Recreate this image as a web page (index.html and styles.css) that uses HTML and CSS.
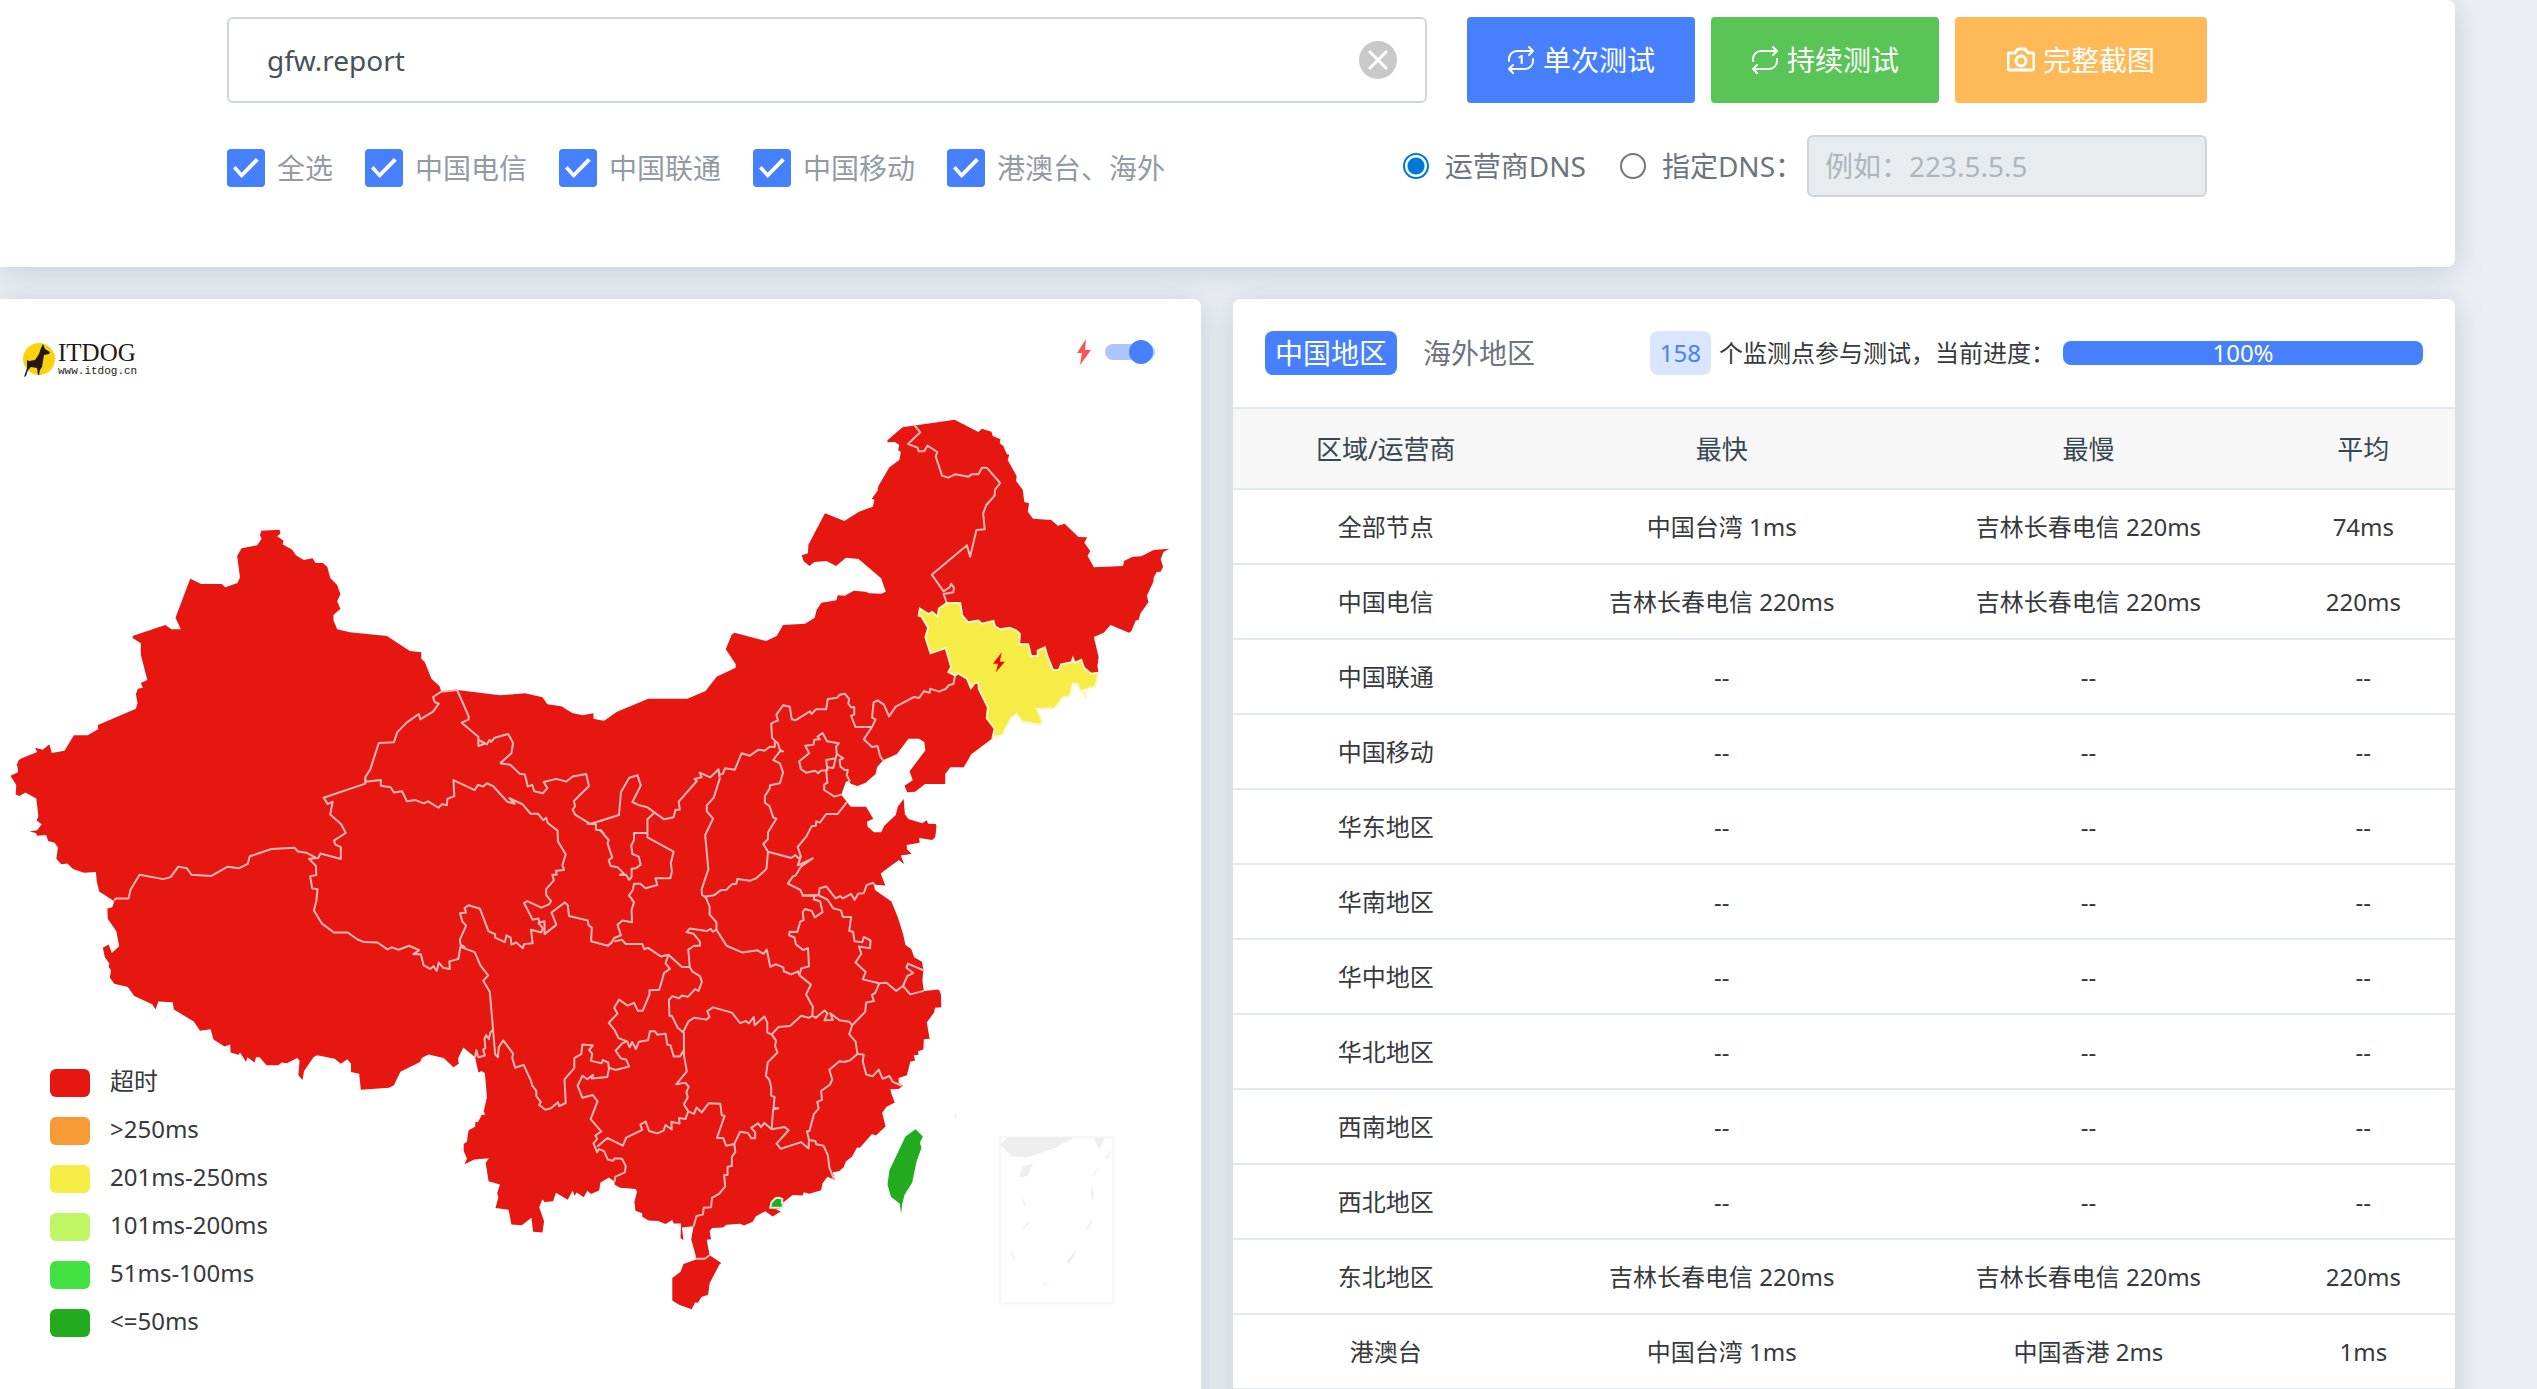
FILE: index.html
```html
<!DOCTYPE html>
<html lang="zh-CN">
<head>
<meta charset="utf-8">
<meta name="viewport" content="width=device-width, initial-scale=1">
<title>gfw.report - ITDOG</title>
<link rel="stylesheet" href="styles.css">
</head>
<body>
<main class="page">
  <form class="card test-form">
    <div class="search-row">
      <div class="host-field">
        <input class="host-input" type="text" value="gfw.report" aria-label="域名">
        <button class="clear-btn" type="button" aria-label="清空">
          <svg viewBox="0 0 38 38" aria-hidden="true"><circle cx="19" cy="19" r="19" fill="#c9c9c9"/><path d="M10 10l18 18M28 10L10 28" stroke="#fff" stroke-width="3" fill="none"/></svg>
        </button>
      </div>
      <div class="actions">
        <button class="btn btn-blue" type="button">
          <svg class="icon" viewBox="0 0 28 28" aria-hidden="true"><path d="M2 15v-2a8 8 0 0 1 8-8h16M22 1l4 4-4 4M26 13v2a8 8 0 0 1-8 8H2M6 19l-4 4 4 4"/><text x="14" y="18" text-anchor="middle">1</text></svg>
          单次测试</button>
        <button class="btn btn-green" type="button">
          <svg class="icon" viewBox="0 0 28 28" aria-hidden="true"><path d="M2 15v-2a8 8 0 0 1 8-8h16M22 1l4 4-4 4M26 13v2a8 8 0 0 1-8 8H2M6 19l-4 4 4 4"/></svg>
          持续测试</button>
        <button class="btn btn-orange" type="button">
          <svg class="icon" viewBox="0 0 28 28" aria-hidden="true"><path stroke-width="3" d="M3 7h5l3-4h7l3 4h4a2 2 0 0 1 2 2v13a2 2 0 0 1-2 2H3a2 2 0 0 1-2-2V9a2 2 0 0 1 2-2z"/><circle cx="14" cy="15" r="5" stroke-width="3"/></svg>
          完整截图</button>
      </div>
    </div>
    <div class="option-row">
      <div class="isp-list">
        <label class="check"><input type="checkbox" checked>全选</label>
        <label class="check"><input type="checkbox" checked>中国电信</label>
        <label class="check"><input type="checkbox" checked>中国联通</label>
        <label class="check"><input type="checkbox" checked>中国移动</label>
        <label class="check"><input type="checkbox" checked>港澳台、海外</label>
      </div>
      <div class="dns">
        <label class="radio"><input type="radio" name="dns" checked>运营商DNS</label>
        <label class="radio"><input type="radio" name="dns">指定DNS：</label>
        <input class="dns-input" type="text" placeholder="例如：223.5.5.5" aria-label="指定DNS" disabled>
      </div>
    </div>
  </form>

  <div class="results">
    <section class="card map-card">
      <div class="map-head">
        <a class="logo" href="#">
          <svg class="logo-mark" viewBox="0 0 34 36" aria-hidden="true">
            <circle cx="17" cy="17" r="16" fill="#fbd20a"/>
            <path d="M21 2l2 5 5 3-1 2-5 1-1 6-1 6-2 3-1 5h-1l-1-7-6-1-3 3-2 6-2 1 3-9V18l2 1 6-1 4-6 2-6z" fill="#231815"/>
          </svg>
          <span class="logo-text"><span class="logo-name">ITDOG</span><span class="logo-url">www.itdog.cn</span></span>
        </a>
        <label class="flash-toggle">
          <svg class="bolt" viewBox="0 0 14 26" aria-hidden="true"><path d="M9 0L0 14h5L3 26l11-15H8z" fill="#ff5252"/></svg>
          <input type="checkbox" checked aria-label="闪电动画">
        </label>
      </div>
      <div class="map-wrap">
        <svg class="map" viewBox="0 399 1201 990" role="img" aria-label="中国地图">
          <g class="land">
            <!-- north-west -->
            <path transform="matrix(.408163 0 0 .333333 0 290)" d="M40 1500L40 1485 26 1457 44 1447 46 1432 41 1425 49 1407 91 1386 86 1373 105 1379 121 1363 127 1389 158 1382 181 1336 215 1336 240 1318 240 1305 333 1256 337 1240 333 1212 338 1196 350 1193 345 1179 361 1170 345 1094 345 1060 325 1044 325 1038 405 1005 420 1018 443 1018 430 983 466 866 493 882 543 882 552 892 582 879 588 862 581 798 592 775 630 766 641 746 637 736 640 722 685 719 687 731 679 739 695 752 692 763 716 779 725 796 744 810 766 805 773 819 791 819 802 831 809 864 826 885 834 913 826 934 834 956 817 975 817 991 826 1018 857 1027 948 1038 1004 1083 1032 1087 1032 1106 1041 1117 1057 1166 1077 1189 1081 1205 1120 1200 1225 1216 1286 1210 1329 1222 1341 1243 1375 1249 1402 1269 1427 1276 1454 1270 1454 1286 1480 1293 1513 1266 1568 1238V1500z"/>
            <!-- south-west -->
            <path transform="matrix(.408163 0 0 .401148 0 760)" d="M46 0L42 12 45 33 26 40 41 62 38 86 48 90 62 81 89 96 94 140 90 151 102 160 91 175 72 178 88 182 91 189 113 187 118 202 134 206 142 219 138 246 150 260 165 258 179 272 206 281 235 279 237 302 243 328 280 352 275 367 263 370 264 396 285 427 292 464 274 481 266 460 252 468 257 492 268 507 266 515 272 524 269 542 280 558 313 566 329 588 373 609 381 622 388 602 423 604 426 622 475 652 490 675 516 671 523 697 550 714 564 709 565 729 584 735 588 729 603 753 606 741 624 754 627 741 636 741 653 761 682 761 690 754 703 756 728 743 734 749 731 786 741 798 745 775 768 741 777 736 820 745 835 757 851 746 860 757 860 778 880 782 884 822 953 817 965 811 981 777 1029 753 1034 742 1050 734 1087 743 1111 766 1124 757 1122 745 1135 717 1164 741 1172 779 1180 775 1188 781 1193 841 1185 876 1189 884 1180 885 1171 903 1165 902 1164 914 1148 923 1144 951 1136 957 1136 974 1144 994 1138 1008 1162 996 1198 993 1190 1004 1197 1050 1225 1058 1218 1080 1221 1090 1214 1117 1246 1121 1253 1158 1278 1160 1302 1141 1306 1176 1329 1178 1333 1150 1321 1115 1329 1095 1334 1102 1355 1100 1362 1079 1391 1096 1403 1074 1408 1086 1413 1078 1430 1090 1439 1074 1448 1082 1468 1073 1471 1053 1492 1041 1506 1051 1507 1059 1521 1065 1558 1069 1561 1076 1555 1102 1558 1123 1568 1127V0z"/>
            <!-- north-east -->
            <path transform="matrix(.395408 0 0 .333333 600 400)" d="M0 962L11 962 42 936 122 896 221 896 267 873 295 830 343 803 343 792 318 748 333 704 340 698 420 723 447 708 463 675 519 671 543 653 548 629 560 608 598 601 601 586 619 587 642 572 671 575 681 580 711 581 723 575 711 535 654 477 622 473 597 498 573 483 542 486 530 498 515 484 510 466 526 460 527 434 569 340 618 363 655 335 690 320 694 299 687 297 702 272 704 258 732 202 757 180 761 156 754 150 757 135 746 126 727 127 727 121 765 82 897 59 957 96 966 86 990 95 993 108 1013 118 1011 130 1020 138 1029 163 1035 164 1031 180 1054 229 1052 242 1069 269 1073 306 1085 310 1082 335 1095 356 1141 360 1158 377 1175 371 1210 411 1232 412 1225 428 1240 454 1233 467 1249 502 1323 498 1325 483 1347 470 1369 469 1400 450 1440 446 1425 456 1418 477 1424 500 1418 515 1408 516 1400 533 1400 544 1383 587 1387 607 1367 640 1362 660 1355 661 1344 693 1338 698 1291 675 1274 698 1249 711 1261 771 1258 798 1261 818 1150 850 1000 960 993 1015 939 1063 920 1102 886 1102 873 1122 873 1152 822 1152 797 1175 777 1177 770 1157 791 1141 783 1114 823 1051 820 1026 807 1016 780 1016 751 1062 716 1081 701 1101 697 1122 672 1148 651 1158 634 1151 629 1143 622 1145 610 1184 624 1205 634 1220 673 1220 691 1256 675 1265 677 1280 693 1297 711 1297 719 1277 748 1245 753 1220 768 1197 771 1243 780 1257 815 1270 826 1261 830 1271 849 1272 851 1279 848 1311 840 1320 808 1314 805 1327 775 1333 775 1349 788 1361 760 1366 769 1392 757 1379 708 1420 721 1456 693 1453 692 1468 711 1490 730 1500H0z"/>
            <!-- south-east and Hainan -->
            <path transform="matrix(.484694 0 0 .350128 460 840)" d="M300 0H948V8L921 14 922 26 931 39 909 44 915 68 905 56 868 96 877 130 854 127 856 143 890 176 903 220 914 268 919 300 931 311 937 335 953 348 956 370 954 402 957 431 988 427 992 440 993 478 980 479 978 493 963 521 969 568 957 569 956 598 945 603 946 613 936 615 939 630 929 633 922 672 905 680 905 693 914 702 905 711 888 712 890 725 897 750 880 762 871 779 878 818 858 844 850 840 825 879 819 878 809 904 796 918 792 934 782 946 769 949 774 971 758 962 748 980 745 1000 721 1010 709 1006 707 1015 686 1014 667 1035 665 1050 652 1055 662 1061 645 1075 630 1060 610 1075 604 1090 586 1101 578 1096 550 1099 542 1107 520 1108 515 1117 518 1140 509 1142 515 1186 539 1208 535 1213 515 1266 512 1299 498 1305 491 1322 485 1321 478 1340 453 1328 438 1315 438 1251 455 1233 461 1211 487 1198 486 1185 477 1140 482 1103 458 1107 461 1143 455 1137 456 1095 441 1095 438 1085 424 1097 409 1088 389 1087 376 1076 376 1066 362 1059 360 1033 366 1004 362 996 330 993 319 984 319 975 308 964 300 900z"/>
          </g>

          <g class="borders" transform="matrix(.408163 0 0 .333333 0 290)">
            <path d="M1081 1205L1061 1221 1065 1236 1075 1241 1061 1265 1030 1288 1026 1272 997 1297 973 1327 965 1357 928 1359 907 1439 895 1461V1478"/>
            <path d="M1081 1205L1120 1200 1148 1278 1148 1289 1131 1298 1172 1340 1172 1368 1186 1362 1174 1350M1186 1362L1180 1354 1193 1363 1199 1350 1203 1356 1212 1343 1245 1332 1257 1359 1253 1390 1225 1420"/>
          </g>
          <g class="borders" transform="matrix(.408163 0 0 .401148 0 760)">
            <path d="M895 54L933 50 933 64 957 68 965 81 985 78 997 103 1018 100 1038 108 1049 103 1074 119 1083 110 1095 113 1096 97 1113 90 1111 50 1163 75 1171 62 1184 66 1193 58 1209 66 1243 104 1261 109 1248 95 1281 111 1300 134 1318 134 1331 150 1338 144 1342 157 1366 176 1367 203 1386 235 1378 262 1382 274 1362 276 1364 286 1353 286 1357 300 1338 322 1338 336 1350 352 1345 360 1326 368 1292 352 1284 357 1305 398 1319 395 1322 405 1334 402 1334 434 1363 411 1351 380 1384 355 1391 362 1394 389 1440 400 1442 412 1450 418 1448 452 1489 463 1500 454"/>
            <path d="M895 46V59L793 94 803 110 815 104 809 136 836 160 847 182 818 201 822 211 835 217 835 247 785 233 780 244 757 246 774 264 775 287 760 290 765 320 778 322 775 352 769 375 789 408 818 430 852 430 877 448 893 454 925 455 949 472 960 467 977 473 1002 463 1027 474 1013 484 1031 484 1038 512 1054 521 1062 514 1070 526 1075 505 1086 518 1102 521 1101 502 1123 496 1128 466 1163 479 1177 512 1196 537 1184 550 1200 578 1208 672 1213 733 1220 741 1222 716 1233 699 1257 732 1255 742 1262 767 1283 760 1301 800 1304 812 1314 825 1314 838 1325 852 1321 860 1336 872 1350 868 1367 853 1370 863 1386 855 1383 796 1407 768 1407 743 1424 733 1427 709 1453 712 1443 723 1451 732 1448 750 1474 756 1477 748 1490 754 1492 770 1488 790 1450 794 1453 785 1439 796 1427 787 1415 812 1427 842 1452 835 1464 851 1447 895 1473 926 1459 936 1463 945 1454 955 1463 978 1467 970 1480 975 1489 996 1502 999 1506 993 1524 994 1533 1012 1531 1028 1507 1039 1506 1051"/>
            <path d="M280 350L284 345 315 345 320 323 342 286 400 297 418 292 437 266 458 270 469 286 518 289 558 266 585 270 607 259 612 240 665 222 722 219 730 228 750 231 775 244"/>
            <path d="M1140 467L1128 460 1127 447 1142 413 1133 403 1127 382 1142 380 1138 369 1148 362 1176 371 1197 427 1213 434 1213 443 1237 454 1241 437 1251 443 1253 460 1265 455 1281 469 1284 459 1305 457 1301 423 1326 430 1330 420 1318 405"/>
            <path d="M1164 741L1167 723 1172 741 1188 737 1184 722 1189 718 1187 694 1191 686 1198 696 1201 680 1208 672"/>
            <path d="M1225 8L1250 12 1273 34 1286 36 1293 66 1304 62 1309 78 1330 83 1341 70 1332 55 1363 47 1387 54 1403 41 1436 35 1443 65 1406 102 1409 115 1403 124 1409 136 1446 159 1477 150M1437 159L1460 160 1460 174 1472 175 1480 184"/>
          </g>
          <g class="borders" transform="matrix(.395408 0 0 .333333 600 400)">
            <path d="M795 75L810 97 779 132 803 143 806 154 820 154 828 137 853 156 849 169 865 227 881 233 898 223 932 230 940 223 957 223 966 203 978 203 1012 249 999 269 998 287 977 315 969 340 973 388 952 390 936 470 928 436 839 524 869 574 885 561 888 551 895 563 894 577 869 582 877 609"/>
            <path d="M898 826L894 852 883 855 874 867 857 875 835 866 834 878 819 874 807 894 794 891 748 920 731 949 718 914 702 901 692 907 688 953 697 958 688 981 646 981 635 947 643 944 643 921 635 922 628 911 630 897 619 881 606 884 600 893 576 897 572 928 546 928 535 942 531 934 494 961 485 958 480 920 463 916 446 944 450 961 433 970 435 1013 442 1022 442 1041 429 1040 416 1052 401 1049 379 1067 358 1060 341 1109 316 1105 311 1121 301 1125 300 1108 279 1132 252 1118 257 1132 239 1137 245 1143 199 1205 202 1229 191 1229 186 1252 162 1258 120 1222 99 1216 82 1206 103 1157 95 1126 74 1133 53 1176 48 1245 0 1263"/>
            <path d="M688 981L667 1018 688 1041 702 1038 709 1070 717 1083"/>
            <path d="M442 1022L450 1030 455 1050 463 1054 455 1054 438 1080 455 1090 463 1117 455 1150 430 1156 429 1166 417 1188 417 1208 429 1219 438 1252 446 1256 425 1297 425 1317 413 1332 425 1355 421 1407"/>
            <path d="M301 1125L303 1135 288 1192 270 1216 270 1234 286 1256 266 1305 274 1408 257 1468 258 1485 264 1490 288 1486 305 1471 320 1469 333 1453 345 1451 347 1437 380 1442 395 1435 421 1407"/>
            <path d="M425 1355L484 1374 494 1365 502 1375 508 1370 500 1341 522 1309 535 1279 546 1277 547 1264 556 1268 572 1242 601 1242 624 1207"/>
            <path d="M508 1370L500 1396 538 1375 508 1400 495 1426 488 1429 475 1451 507 1470 513 1487 549 1487"/>
            <path d="M563 999L574 1024 604 1030 597 1040 599 1062 596 1075 572 1080 575 1110 558 1112 552 1120 544 1112 521 1118 508 1107 504 1084 529 1060 519 1037 540 1034 542 1019 556 1018 550 1010z"/>
            <path d="M599 1062L615 1075 606 1080 608 1100 619 1110 627 1110 624 1125 632 1145M572 1110L575 1148 567 1154 567 1170 593 1190 610 1184M596 1075L590 1104 572 1102"/>
            <path d="M136 1240L120 1258 120 1312 186 1355 179 1390 182 1414 178 1435 140 1435 145 1455 115 1465 102 1451 86 1451 83 1470 73 1487 83 1500"/>
            <path d="M120 1299L86 1299 86 1320 79 1337 82 1362 98 1370 103 1394 91 1405 80 1406 80 1430 74 1440 66 1424 50 1425 60 1420 45 1402 27 1398 22 1380 31 1372 19 1330 22 1320 0 1290"/>
          </g>
          <g class="borders" transform="matrix(.484694 0 0 .350128 460 840)">
            <path d="M354 170L359 177 354 200 355 235 335 230 325 242 332 272 318 280 312 294 305 302M318 290L334 285 342 297 376 297 380 312 388 308 415 333 430 328 458 363 474 363"/>
            <path d="M506 160L515 190 515 213 529 235 529 256 550 302 582 321 614 315 626 325 633 313 640 362 652 355 667 364 668 375 684 384 697 375 700 386 724 413 714 441 728 476 727 502"/>
            <path d="M529 256L522 262 517 254 509 260 474 253 467 263 482 268 495 290 495 302 483 302 471 313 474 363 479 375 495 389 499 405 492 431 485 426 470 448 458 444 452 452 438 446 431 457 432 502 437 502 449 536 460 549 472 517 483 508 509 513 515 505 510 489 522 478 561 493 578 523 590 517 596 524 606 506 608 529 628 504 634 521 634 550 643 555 657 534 681 531 704 502 720 508 727 502"/>
            <path d="M700 386L704 367 720 361 718 309 708 314 693 298 690 278 679 272 680 262 696 263 702 233 709 229 707 206 712 197 726 203 732 221 748 206 743 175 730 170 731 158"/>
            <path d="M727 502L734 508 752 487 758 495 752 515 769 514 764 495 783 515 803 519 809 529 803 555 816 575 820 611 805 629 793 634 783 632 762 656 768 684 763 699 745 717 747 742 737 748 740 767 730 783 721 831 716 832 720 857 733 860 735 869 750 873 759 901 762 936 772 970"/>
            <path d="M643 555L652 573 650 588 655 607 635 635 631 674 638 684 642 705 642 730 649 734 647 765 657 766 646 770 643 826 670 820 678 829 653 867 662 882 704 863 719 881 720 857"/>
            <path d="M643 826L628 808 621 820 615 809 601 822 609 835 609 852 601 852 594 837 578 833 566 868 568 891 561 905 561 931 552 933 552 957 545 957 547 990 535 1010 520 1022 518 1049 503 1050 501 1070 488 1074 482 1103"/>
            <path d="M566 868L549 873 543 851 530 851 546 788 540 786 537 753 513 752 499 778 488 764 483 782 471 775 462 755 470 735 467 720 472 705 465 693 446 698 468 661 462 614 462 549"/>
            <path d="M471 775L465 797 452 794 453 810 436 805 437 827 424 814 420 830 407 838 390 831 383 804 372 813 376 828 343 850 336 873 304 851 283 876"/>
            <path d="M430 328L424 352 433 368 421 380 411 428 391 429 391 441 377 488 367 488 359 465 346 473 328 456 318 479 325 496 307 522 319 543 327 566 345 575 350 592 355 577 363 597 369 576 388 572 392 546 402 546 407 556 424 553 428 585 434 586 441 618 454 618 462 600"/>
            <path d="M345 575L335 580 321 602 332 624 343 627 349 647 321 657 307 650"/>
            <path d="M707 158L740 158 758 170 770 195 786 201 790 220 807 220 803 260 811 262 814 289 830 292 833 277 847 287 846 309 823 304 828 325 816 350 837 377 831 398 865 409 880 408 900 431 914 417 929 441 957 431"/>
            <path d="M740 158L742 138 756 133 775 167 784 160 790 167 807 154 814 171 822 153 833 152 839 129 852 122 856 130"/>
            <path d="M914 417L923 388 935 380 921 365 924 353 956 372M865 409L857 436 850 443 854 460 838 464 836 491 809 529M820 611L833 613 831 632 838 670 851 675 864 656 872 682 886 674 893 691 912 702M487 1196L505 1196 515 1186"/>
          </g>

          <g transform="matrix(.395408 0 0 .333333 600 400)">
            <path class="jilin" d="M877 609L911 609 916 646 931 667 957 662 966 671 995 663 999 679 1012 688 1036 683 1052 691 1062 702 1060 733 1083 733 1090 768 1107 768 1107 752 1125 742 1131 767 1146 811 1161 809 1166 793 1193 787 1196 775 1201 789 1217 780 1224 803 1242 821 1261 818 1253 858 1218 873 1229 880 1229 892 1214 872 1209 854 1196 850 1188 889 1170 892 1150 925 1104 927 1118 961 1113 975 1067 964 1054 942 1040 954 1017 1005 993 1012 998 986 978 955 981 922 958 867 957 848 948 849 938 864 928 836 906 820 898 826 881 816 888 801 874 744 836 760 823 712 830 683 813 650 806 647 809 626 831 642 840 636 854 650 857 626z"/>
            <path fill="#f00" d="M1016 757L994 791H1007L1001 817 1024 785H1011z"/>
          </g>
          <g transform="matrix(.484694 0 0 .350128 460 840)">
            <path class="hongkong" d="M657 1022L665 1025 664 1036 667 1036 665 1050 640 1050 643 1034 651 1023z"/>
            <path fill="#23ab1f" d="M940 826L955 847 949 865 952 880 942 918 933 978 917 1014 912 1042 910 1068 907 1038 889 1019 882 984 886 943 919 847z"/>
            <rect class="inset" x="1114" y="849" width="234" height="474"/>
            <path fill="#eee" d="M1130 849H1268L1228 880 1170 907 1138 903 1114 868zM1307 851H1330L1319 884zM1160 932L1182 924 1171 959 1154 964zM1343 885L1338 909 1329 912zM1319 937L1305 964 1311 945zM1302 995H1307V1026H1302zM1158 1011L1168 1043 1163 1042zM1306 1080L1303 1093 1296 1110 1291 1109zM1176 1091L1156 1122 1166 1098zM1136 1178H1141L1146 1207zM1274 1164L1268 1186 1256 1209 1250 1208zM1222 1257L1206 1270 1199 1270zM1024 780L1026 793 1017 793z"/>
          </g>
        </svg>
        <ul class="legend">
          <li><span class="swatch timeout"></span>超时</li>
          <li><span class="swatch over250"></span>&gt;250ms</li>
          <li><span class="swatch to250"></span>201ms-250ms</li>
          <li><span class="swatch to200"></span>101ms-200ms</li>
          <li><span class="swatch to100"></span>51ms-100ms</li>
          <li><span class="swatch to50"></span>&lt;=50ms</li>
        </ul>
      </div>
    </section>

    <section class="card table-card">
      <div class="table-head">
        <div class="tabs">
          <button class="tab active" type="button">中国地区</button>
          <button class="tab" type="button">海外地区</button>
        </div>
        <div class="status">
          <span class="count">158</span>
          <span>个监测点参与测试，当前进度：</span>
          <div class="progress" role="progressbar" aria-valuenow="100" aria-label="当前进度"><div class="bar" style="width:100%">100%</div></div>
        </div>
      </div>
      <table class="stats">
        <colgroup><col class="c-area"><col class="c-ping"><col class="c-ping"><col class="c-avg"></colgroup>
        <thead><tr><th>区域/运营商</th><th>最快</th><th>最慢</th><th>平均</th></tr></thead>
        <tbody>
          <tr><td>全部节点</td><td>中国台湾 1ms</td><td>吉林长春电信 220ms</td><td>74ms</td></tr>
          <tr><td>中国电信</td><td>吉林长春电信 220ms</td><td>吉林长春电信 220ms</td><td>220ms</td></tr>
          <tr><td>中国联通</td><td>--</td><td>--</td><td>--</td></tr>
          <tr><td>中国移动</td><td>--</td><td>--</td><td>--</td></tr>
          <tr><td>华东地区</td><td>--</td><td>--</td><td>--</td></tr>
          <tr><td>华南地区</td><td>--</td><td>--</td><td>--</td></tr>
          <tr><td>华中地区</td><td>--</td><td>--</td><td>--</td></tr>
          <tr><td>华北地区</td><td>--</td><td>--</td><td>--</td></tr>
          <tr><td>西南地区</td><td>--</td><td>--</td><td>--</td></tr>
          <tr><td>西北地区</td><td>--</td><td>--</td><td>--</td></tr>
          <tr><td>东北地区</td><td>吉林长春电信 220ms</td><td>吉林长春电信 220ms</td><td>220ms</td></tr>
          <tr><td>港澳台</td><td>中国台湾 1ms</td><td>中国香港 2ms</td><td>1ms</td></tr>
        </tbody>
      </table>
    </section>
  </div>
</main>
</body>
</html>
```
FILE: styles.css
```css
* { box-sizing: border-box; }

body {
  margin: 0;
  background: #ebeff4;
  color: #37393c;
  font-family: "Noto Sans", "Noto Sans CJK SC", sans-serif;
  font-size: 24px;
  line-height: 36px;
}

button, input { font: inherit; }
button { border: 0; padding: 0; cursor: pointer; }

.page {
  display: flex;
  flex-direction: column;
  gap: 32px;
  padding-right: 82px;
}

.card {
  background: #fff;
  border-radius: 0 8px 8px 0;
  box-shadow: 0 4px 28px rgba(80, 100, 130, .25);
}

/* test form */
.test-form {
  display: flex;
  flex-direction: column;
  gap: 32px;
  padding: 17px 248px 70px 227px;
  font-size: 28px;
}

.search-row { display: flex; gap: 40px; }
.host-field { position: relative; flex: 1; }

.host-input {
  width: 100%;
  height: 86px;
  padding: 0 88px 0 38px;
  border: 2px solid #ced4da;
  border-radius: 6px;
  color: #495057;
}

.clear-btn {
  position: absolute;
  top: 24px;
  right: 30px;
  width: 38px;
  height: 38px;
  background: none;
}
.clear-btn svg { display: block; }

.actions { display: flex; gap: 16px; }

.btn {
  display: flex;
  align-items: center;
  justify-content: center;
  gap: 8px;
  height: 86px;
  padding: 0 40px;
  border-radius: 4px;
  color: #fff;
}
.btn-blue { background: #4680ff; }
.btn-green { background: #5ac557; }
.btn-orange { padding: 0 52px; background: #ffb957; }

.icon {
  width: 28px;
  height: 28px;
  fill: none;
  stroke: #fff;
  stroke-width: 2;
  stroke-linecap: round;
  stroke-linejoin: round;
}
.icon text {
  fill: #fff;
  stroke: none;
  font-size: 12px;
  font-weight: 700;
}

.option-row {
  display: flex;
  align-items: center;
  justify-content: space-between;
}
.isp-list {
  display: flex;
  gap: 32px;
  padding-top: 4px;
  color: #929ba3;
}
.check { display: flex; align-items: center; gap: 12px; }

.check input {
  appearance: none;
  width: 38px;
  height: 38px;
  margin: 0;
  padding: 6px;
  border-radius: 4px;
}
.check input:checked { background: #4680ff; }
.check input::before {
  content: "";
  display: block;
  width: 26px;
  height: 26px;
  background: #fff;
  clip-path: polygon(0 52%, 10% 42%, 33% 68%, 88% 12%, 99% 22%, 33% 88%);
}

.dns { display: flex; align-items: center; color: #6c757d; }
.radio { display: flex; align-items: center; gap: 16px; }
.radio + .radio { margin-left: 34px; }

.radio input {
  appearance: none;
  width: 26px;
  height: 26px;
  margin: 0;
  border: 2px solid #767676;
  border-radius: 50%;
}
.radio input:checked {
  border-color: #0078d7;
  background: radial-gradient(circle, #0078d7 0 8px, #fff 9px);
}

.dns-input {
  width: 400px;
  height: 62px;
  margin-left: 4px;
  padding: 0 16px;
  border: 2px solid #ced4da;
  border-radius: 6px;
  background: #e9ecef;
}
.dns-input::placeholder { color: #adb5bd; opacity: 1; }

/* results */
.results {
  display: grid;
  grid-template-columns: 1201fr 1222fr;
  gap: 32px;
}

.map-head {
  display: flex;
  align-items: flex-start;
  justify-content: space-between;
  height: 100px;
  padding: 40px 46px 0 22px;
}

.logo {
  display: flex;
  color: #231815;
  text-decoration: none;
}
.logo-mark { width: 34px; height: 36px; margin-top: 3px; }
.logo-text { display: flex; flex-direction: column; margin-left: 2px; }
.logo-name {
  font-family: "Liberation Serif", serif;
  font-size: 25px;
  line-height: 28px;
}
.logo-url {
  font-family: "Liberation Mono", monospace;
  font-size: 11px;
  line-height: 8px;
}

.flash-toggle { display: flex; align-items: center; gap: 14px; }
.bolt { width: 14px; height: 26px; }
.flash-toggle input {
  appearance: none;
  display: flex;
  align-items: center;
  justify-content: flex-end;
  width: 50px;
  height: 16px;
  margin: 0;
  padding-right: 2px;
  border-radius: 8px;
  background: #adc6ff;
}
.flash-toggle input::before {
  content: "";
  width: 24px;
  height: 24px;
  border-radius: 50%;
  background: #4680ff;
}

.map-wrap { position: relative; }
.map { display: block; width: 100%; }
.land { fill: #e61610; }
.borders path {
  fill: none;
  stroke: #fbb8b5;
  stroke-width: 2;
  stroke-linejoin: round;
  vector-effect: non-scaling-stroke;
}
.jilin {
  fill: #f5ec45;
  stroke: #fdf6c8;
  stroke-width: 2;
  vector-effect: non-scaling-stroke;
}
.hongkong {
  fill: #23ab1f;
  stroke: #dcefdc;
  stroke-width: 2;
  vector-effect: non-scaling-stroke;
}
.inset {
  fill: none;
  stroke: #f6f6f6;
  stroke-width: 2;
  vector-effect: non-scaling-stroke;
}

.legend {
  position: absolute;
  left: 50px;
  bottom: 52px;
  display: flex;
  flex-direction: column;
  gap: 20px;
  margin: 0;
  padding: 0;
  list-style: none;
  line-height: 24px;
}
.legend li { display: flex; gap: 20px; }
.swatch { width: 40px; height: 28px; border-radius: 6px; }
.timeout { background: #e61610; }
.over250 { background: #f79a35; }
.to250 { background: #f5ec45; }
.to200 { background: #bff663; }
.to100 { background: #43e041; }
.to50 { background: #23ab1f; }

/* table */
.table-card { padding-bottom: 32px; border-radius: 8px; }

.table-head {
  display: flex;
  align-items: center;
  justify-content: space-between;
  height: 108px;
  padding: 0 32px;
}
.tabs { display: flex; gap: 16px; }
.tab {
  height: 44px;
  padding: 0 10px;
  border-radius: 8px;
  background: none;
  color: #6c757d;
  font-size: 28px;
  line-height: 44px;
}
.tab.active { background: #4680ff; color: #fff; }

.status { display: flex; align-items: center; gap: 8px; }
.count {
  padding: 0 10px;
  border-radius: 8px;
  background: #dae6ff;
  color: #4680ff;
  line-height: 44px;
}
.progress { width: 360px; border-radius: 8px; background: #e9ecef; }
.bar {
  border-radius: 8px;
  background: #4680ff;
  color: #fff;
  line-height: 24px;
  text-align: center;
}

.stats {
  width: 100%;
  table-layout: fixed;
  border-collapse: collapse;
  text-align: center;
}
.c-area { width: 25%; }
.c-ping { width: 30%; }
.c-avg { width: 15%; }

.stats th, .stats td { padding: 0; border-bottom: 2px solid #e3e8ec; }
.stats th {
  height: 81px;
  border-top: 2px solid #e3e8ec;
  background: #f7f7f7;
  color: #37474f;
  font-size: 26px;
  font-weight: 400;
}
.stats td { height: 75px; }
```
